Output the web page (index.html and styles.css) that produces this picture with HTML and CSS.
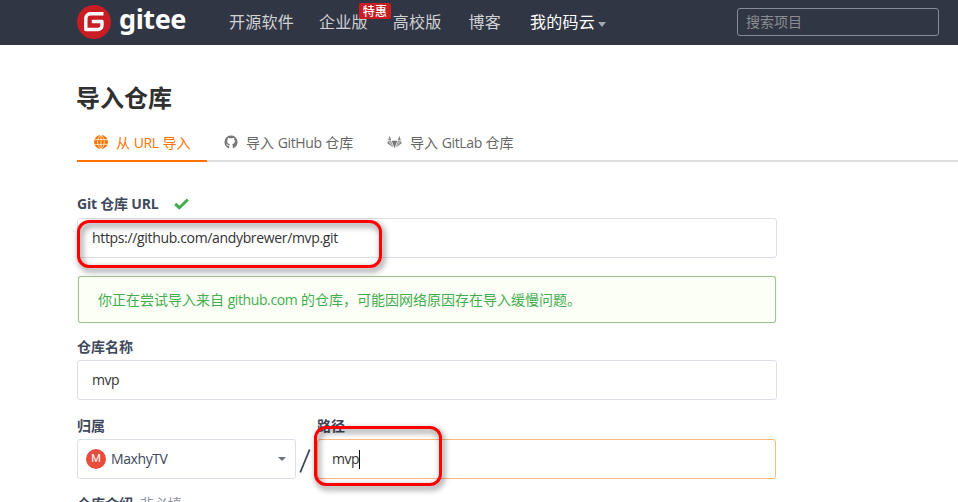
FILE: index.html
```html
<!DOCTYPE html>
<html lang="zh-CN">
<head>
<meta charset="utf-8">
<title>导入仓库</title>
<link rel="stylesheet" href="styles.css">
</head>
<body>
<header class="topbar">
  <a class="brand">
    <svg class="brand-mark" viewBox="0 0 34 34" width="34" height="34"><circle cx="17" cy="17" r="17" fill="#c71d23"/><path d="M26.500 8.800H13.200a4.400 4.400 0 0 0-4.400 4.400V24.500h12a4.200 4.200 0 0 0 4.200-4.200V16.500H14.800" fill="none" stroke="#fff" stroke-width="3.400" stroke-linejoin="round"/></svg>
    <span class="brand-name">gitee</span>
  </a>
  <nav class="nav">
    <a class="nav-item">开源软件</a>
    <a class="nav-item">企业版<span class="badge">特惠</span></a>
    <a class="nav-item">高校版</a>
    <a class="nav-item nav-blog">博客</a>
    <a class="nav-item nav-mine">我的码云<i class="caret"></i></a>
  </nav>
  <div class="search">搜索项目</div>
</header>
<main class="page">
  <h1 class="title">导入仓库</h1>
  <div class="tabs">
    <a class="tab tab-active">
      <svg class="icon" viewBox="0 0 14 14" width="14" height="14"><circle cx="7" cy="7" r="7" fill="#fe7300"/><path d="M0 4.600h14M0 9.400h14M7 0v14M7 0C2.600 3 2.600 11 7 14M7 0c4.400 3 4.400 11 0 14" fill="none" stroke="#fff" stroke-width=".7"/></svg>
      <span class="tab-text">从 <span class="latin">URL</span> 导入</span>
    </a>
    <a class="tab tab-github">
      <svg class="icon" viewBox="0 0 16 16" width="14" height="14"><path fill="#777" d="M8 .6a7.500 7.500 0 0 0-2.800 14.400c.5.200.8-.1.800-.5v-2c-2 .3-2.500-.5-2.900-1.300-.2-.4-.5-.8-.9-1 .9-.4 1.500.3 1.900.9.500.7 1.200.8 2 .5.100-.5.300-.9.600-1.100C4.900 10.200 3.600 9.300 3.600 6.900c0-.8.300-1.400.8-1.900-.2-.6-.2-1.400.1-2 .8 0 1.500.4 2 .8a7 7 0 0 1 3 0c.5-.4 1.200-.8 2-.8.300.6.300 1.400.1 2 .5.500.8 1.100.8 1.900 0 2.400-1.300 3.300-3.100 3.600.4.300.7.9.7 1.600v2.400c0 .4.300.7.8.5A7.500 7.500 0 0 0 8 .6z"/></svg>
      <span class="tab-text">导入 <span class="latin">GitHub</span> 仓库</span>
    </a>
    <a class="tab tab-gitlab">
      <svg class="icon" viewBox="0 0 15 14" width="15" height="14"><g fill="#888"><path d="M2.700.8 4.300 5.300H1.100zM12.300.8l1.600 4.500h-3.200z"/><path d="M4.700 5.700h5.600L7.500 13.200z" fill="#777"/><path d="M1 5.700h2.900l2.600 6.400zM14 5.700h-2.900L8.500 12.100z" opacity=".8"/><path d="M.9 6 .2 8.200l6.300 4.600zM14.100 6l.7 2.200-6.300 4.600z"/></g></svg>
      <span class="tab-text">导入 <span class="latin">GitLab</span> 仓库</span>
    </a>
  </div>
  <form class="form">
    <div class="field field-url">
      <div class="label"><span class="label-git">Git 仓库 URL</span><svg class="check" viewBox="0 0 15 12" width="15" height="12"><path d="M1.200 6 5.400 9.700 13.800 1.500" fill="none" stroke="#43ad50" stroke-width="3"/></svg></div>
      <div class="input"><span class="url">https://github.com/andybrewer/mvp.git</span></div>
      <i class="mark mark-url"></i>
    </div>
    <div class="alert"><span>你正在尝试导入来自 <span class="host">github.com</span> 的仓库，可能因网络原因存在导入缓慢问题。</span></div>
    <div class="field field-name">
      <div class="label">仓库名称</div>
      <div class="input"><span class="mvp">mvp</span></div>
    </div>
    <div class="row">
      <div class="field field-owner">
        <div class="label">归属</div>
        <div class="input select"><span class="avatar">M</span><span class="owner">MaxhyTV</span><i class="caret caret-dark"></i></div>
      </div>
      <svg class="slash" viewBox="0 0 12 24" width="12" height="24"><path d="M10.700.5 1.200 23.500" stroke="#3d4557" stroke-width="1.800"/></svg>
      <div class="field field-path">
        <div class="label">路径</div>
        <div class="input input-focus"><span class="mvp">mvp</span><i class="cursor"></i></div>
        <i class="mark mark-path"></i>
      </div>
    </div>
    <div class="label label-intro">仓库介绍 <span class="optional">非必填</span></div>
  </form>
</main>
</body>
</html>
```
FILE: styles.css
```css
* { box-sizing: border-box; }
html, body { height: 502px; overflow: hidden; }
body {
  margin: 0;
  background: #fff;
  font: 14px/20px "Open Sans", "Noto Sans CJK SC", sans-serif;
  color: #40485b;
}
.topbar {
  display: flex;
  height: 45px;
  padding-left: 77px;
  background: #313644;
  white-space: nowrap;
}
.brand { display: flex; width: 152px; padding-top: 5px; }
.brand-mark { flex: none; }
.brand-name {
  margin-left: 8px;
  font: 700 27px/28px "Noto Sans", sans-serif;
  letter-spacing: -.4px;
  color: #fff;
}
.nav { display: flex; width: 508px; font-size: 16px; line-height: 45px; letter-spacing: .25px; color: #d0d2d6; }
.nav-item { position: relative; margin-right: 25px; }
.nav-blog { margin-left: 2px; }
.nav-mine { margin-left: 4px; margin-right: 0; color: #fff; }
.badge {
  position: absolute;
  top: 3px;
  left: 40px;
  width: 32px;
  height: 16px;
  border-radius: 2px;
  background: #c71d23;
  color: #fff;
  font-size: 12px;
  line-height: 17px;
  font-weight: 500;
  text-align: center;
}
.caret {
  display: inline-block;
  margin-left: 3px;
  border: 4.500px solid transparent;
  border-top: 5px solid #a5a8af;
  border-bottom: 0;
  vertical-align: 1px;
}
.search {
  width: 202px;
  height: 28px;
  margin-top: 8px;
  padding-left: 8px;
  border: 1px solid #858b9a;
  border-radius: 3px;
  line-height: 26px;
  color: #8b8d92;
}
.page { padding: 37px 0 0 77px; }
.title { margin: 0 0 0 -1px; font-size: 24px; line-height: 32px; color: #303030; }
.tabs {
  display: flex;
  height: 38px;
  margin-top: 10px;
  border-bottom: 2px solid #dcddde;
  color: #666;
  white-space: nowrap;
}
.tab { display: flex; align-items: center; gap: 8px; height: 38px; }
.tab-text { padding-top: 2px; }
.latin { letter-spacing: -.35px; }
.tab-active { width: 130px; padding-left: 17px; border-bottom: 2px solid #fe7300; color: #fe7300; }
.tab-github, .tab-gitlab { height: 36px; }
.tab-github { width: 163px; padding-left: 17px; }
.tab-gitlab { padding-left: 17px; }
.form { width: 700px; margin-top: 32px; }
.field { position: relative; }
.label { display: flex; align-items: center; height: 20px; font-weight: 700; white-space: pre; }
.label-git { letter-spacing: -.2px; }
.check { margin-left: 15px; }
.input {
  display: flex;
  align-items: center;
  height: 40px;
  padding-left: 14px;
  border: 1px solid #dcdfe6;
  border-radius: 3px;
  background: #fff;
  color: #333;
}
.url { letter-spacing: -.34px; }
.mvp { letter-spacing: -.5px; }
.field-url .input { margin-top: 4px; }
.alert {
  display: flex;
  align-items: center;
  height: 47px;
  margin: 18px 0 0 1px;
  width: 698px;
  padding-left: 19px;
  border: 1px solid #a3c293;
  border-radius: 3px;
  box-shadow: 0 0 1px #a3c293;
  background: #fcfff5;
  color: #43ad50;
}
.host { letter-spacing: -.4px; }
.field-name { margin-top: 14px; }
.field-name .input, .row .input { margin-top: 3px; }
.row { display: flex; width: 699px; margin-top: 16px; }
.field-owner { width: 219px; }
.select { padding: 0 9px 0 8px; color: #40485b; }
.select .caret { margin-left: auto; }
.owner { letter-spacing: -.4px; }
.caret-dark { border-top-color: #6a7080; border-top-width: 4px; border-left-width: 4px; border-right-width: 4px; }
.avatar {
  width: 20px;
  height: 20px;
  margin-right: 5px;
  border-radius: 50%;
  background: #e84c3d;
  color: #fff;
  font: 11px/20px Roboto, sans-serif;
  text-align: center;
}
.slash { margin: 33px 6px 0 3px; }
.field-path { flex: 1; }
.input-focus { border-color: #ffb77d; }
.cursor { width: 1px; height: 19px; background: #111; }
.mark {
  position: absolute;
  border: 3px solid #f00;
  border-radius: 12px;
  filter: drop-shadow(2px 3px 3px rgba(0, 0, 0, .6));
}
.mark-url { left: 0; top: 26px; width: 305px; height: 48px; }
.mark-path { left: -3px; top: 10px; width: 128px; height: 60px; }
.label-intro { margin-top: 15px; }
.optional { margin-left: 3px; font-weight: 400; color: #8c92a4; }
```
